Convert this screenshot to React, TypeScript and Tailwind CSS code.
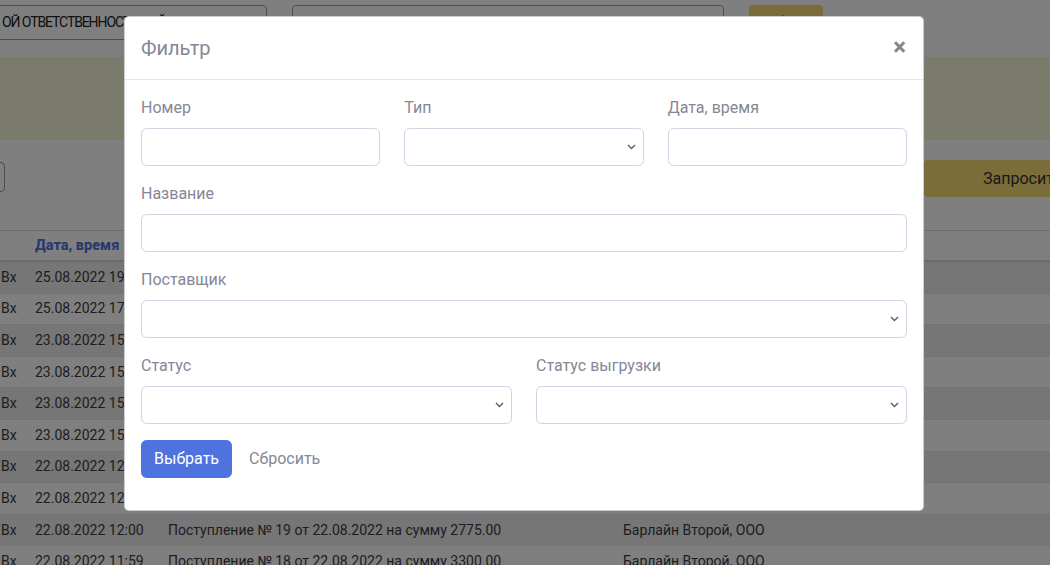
import React from "react"

interface Row {
  dir: string
  date: string
  title: string
  supplier: string
}

const rows: Row[] = [
  { dir: "Вх", date: "25.08.2022 19:14", title: "Поступление № 27 от 25.08.2022 на сумму 1540.00", supplier: "Барлайн Второй, ООО" },
  { dir: "Вх", date: "25.08.2022 17:32", title: "Поступление № 26 от 25.08.2022 на сумму 4120.00", supplier: "Барлайн Второй, ООО" },
  { dir: "Вх", date: "23.08.2022 15:48", title: "Поступление № 25 от 23.08.2022 на сумму 980.00", supplier: "Барлайн Второй, ООО" },
  { dir: "Вх", date: "23.08.2022 15:40", title: "Поступление № 24 от 23.08.2022 на сумму 2210.00", supplier: "Барлайн Второй, ООО" },
  { dir: "Вх", date: "23.08.2022 15:22", title: "Поступление № 23 от 23.08.2022 на сумму 1875.00", supplier: "Барлайн Второй, ООО" },
  { dir: "Вх", date: "23.08.2022 15:05", title: "Поступление № 22 от 23.08.2022 на сумму 640.00", supplier: "Барлайн Второй, ООО" },
  { dir: "Вх", date: "22.08.2022 12:31", title: "Поступление № 21 от 22.08.2022 на сумму 3050.00", supplier: "Барлайн Второй, ООО" },
  { dir: "Вх", date: "22.08.2022 12:14", title: "Поступление № 20 от 22.08.2022 на сумму 1200.00", supplier: "Барлайн Второй, ООО" },
  { dir: "Вх", date: "22.08.2022 12:00", title: "Поступление № 19 от 22.08.2022 на сумму 2775.00", supplier: "Барлайн Второй, ООО" },
  { dir: "Вх", date: "22.08.2022 11:59", title: "Поступление № 18 от 22.08.2022 на сумму 3300.00", supplier: "Барлайн Второй, ООО" },
]

function Chevron() {
  return (
    <svg width="9" height="6" viewBox="0 0 9 6" className="absolute right-[7px] top-1/2 -translate-y-1/2">
      <path d="M1 1l3.5 3.5L8 1" fill="none" stroke="#5a5c69" strokeWidth="1.4" />
    </svg>
  )
}

function Field({ label, select = false }: { label: string; select?: boolean }) {
  return (
    <div className="mb-4 flex-1">
      <div className="mb-2 text-[16px] leading-6 text-[#858796]">{label}</div>
      <div className="relative h-[38px] rounded-[5.6px] border border-[#d1d3e2] bg-white">
        {select && <Chevron />}
      </div>
    </div>
  )
}

export default function App() {
  return (
    <div className="relative h-[565px] w-[1050px] overflow-hidden bg-white font-['Roboto',sans-serif]">
      {/* page behind the modal */}
      <div className="flex h-[57px] items-start gap-[25px] bg-white pt-[5px]">
        <div className="-ml-2 flex h-[35px] w-[275px] items-center overflow-hidden whitespace-nowrap rounded-[4px] border border-[#9a9a9a] pl-[9px] text-[14px] tracking-[-1.1px] text-[#222]">
          ОЙ ОТВЕТСТВЕННОСТЬЮ «ЙОТА»
        </div>
        <div className="h-[35px] w-[432px] rounded-[4px] border border-[#9a9a9a]" />
        <div className="flex h-[35px] w-[74px] items-center justify-center rounded-[4px] bg-[#f6da74] text-[14px] font-bold text-[#222]">
          Выбрать
        </div>
      </div>
      <div className="h-[83px] bg-[#f6f6d8]" />
      <div className="flex h-[90px] items-start justify-between pt-[20px]">
        <div className="-ml-2 mt-[2px] h-[30px] w-[13px] rounded-[4px] border border-[#9a9a9a]" />
        <div className="-mr-[34px] flex h-[37px] w-[160px] shrink-0 items-center rounded-[4px] bg-[#f6da74] pl-[59px] text-[16px] text-[#333]">
          Запросить
        </div>
      </div>
      <div className="border-t border-[#dcdce4] text-[14px] text-[#3a3b45]">
        <div className="flex h-[31px] items-center border-b-2 border-[#d8d8e0]">
          <div className="w-[35px]" />
          <div className="text-[14.5px] font-extrabold text-[#4e73df]">Дата, время</div>
        </div>
        {rows.map((r, i) => (
          <div
            key={i}
            className={`flex h-[31.6px] items-center border-b border-[#e3e6f0] whitespace-nowrap ${i % 2 === 0 ? "bg-[#ececec]" : "bg-white"}`}
          >
            <div className="w-[35px] pl-[1px]">{r.dir}</div>
            <div className="w-[133px]">{r.date}</div>
            <div className="w-[455px]">{r.title}</div>
            <div>{r.supplier}</div>
          </div>
        ))}
      </div>

      {/* backdrop */}
      <div className="absolute inset-0 bg-black/50" />

      {/* modal */}
      <div className="absolute inset-x-0 top-[16px] flex justify-center">
        <div className="-ml-[2px] w-[800px] rounded-[5px] border border-black/20 bg-white">
          <div className="flex items-center justify-between border-b border-[#e3e6f0] p-4">
            <div className="text-[20px] leading-[30px] text-[#858796]">Фильтр</div>
            <div className="mb-[3px] mr-[1px] text-[24px] font-bold leading-none text-[#858585]">×</div>
          </div>
          <div className="p-4">
            <div className="flex gap-6">
              <Field label="Номер" />
              <Field label="Тип" select />
              <Field label="Дата, время" />
            </div>
            <Field label="Название" />
            <Field label="Поставщик" select />
            <div className="flex gap-6">
              <Field label="Статус" select />
              <Field label="Статус выгрузки" select />
            </div>
            <div className="mb-4 flex items-center gap-[5px]">
              <div className="flex h-[38px] items-center rounded-[5.6px] border border-[#4e73df] bg-[#4e73df] px-3 text-[16px] text-white">Выбрать</div>
              <div className="px-3 text-[16px] text-[#858796]">Сбросить</div>
            </div>
          </div>
        </div>
      </div>
    </div>
  )
}
